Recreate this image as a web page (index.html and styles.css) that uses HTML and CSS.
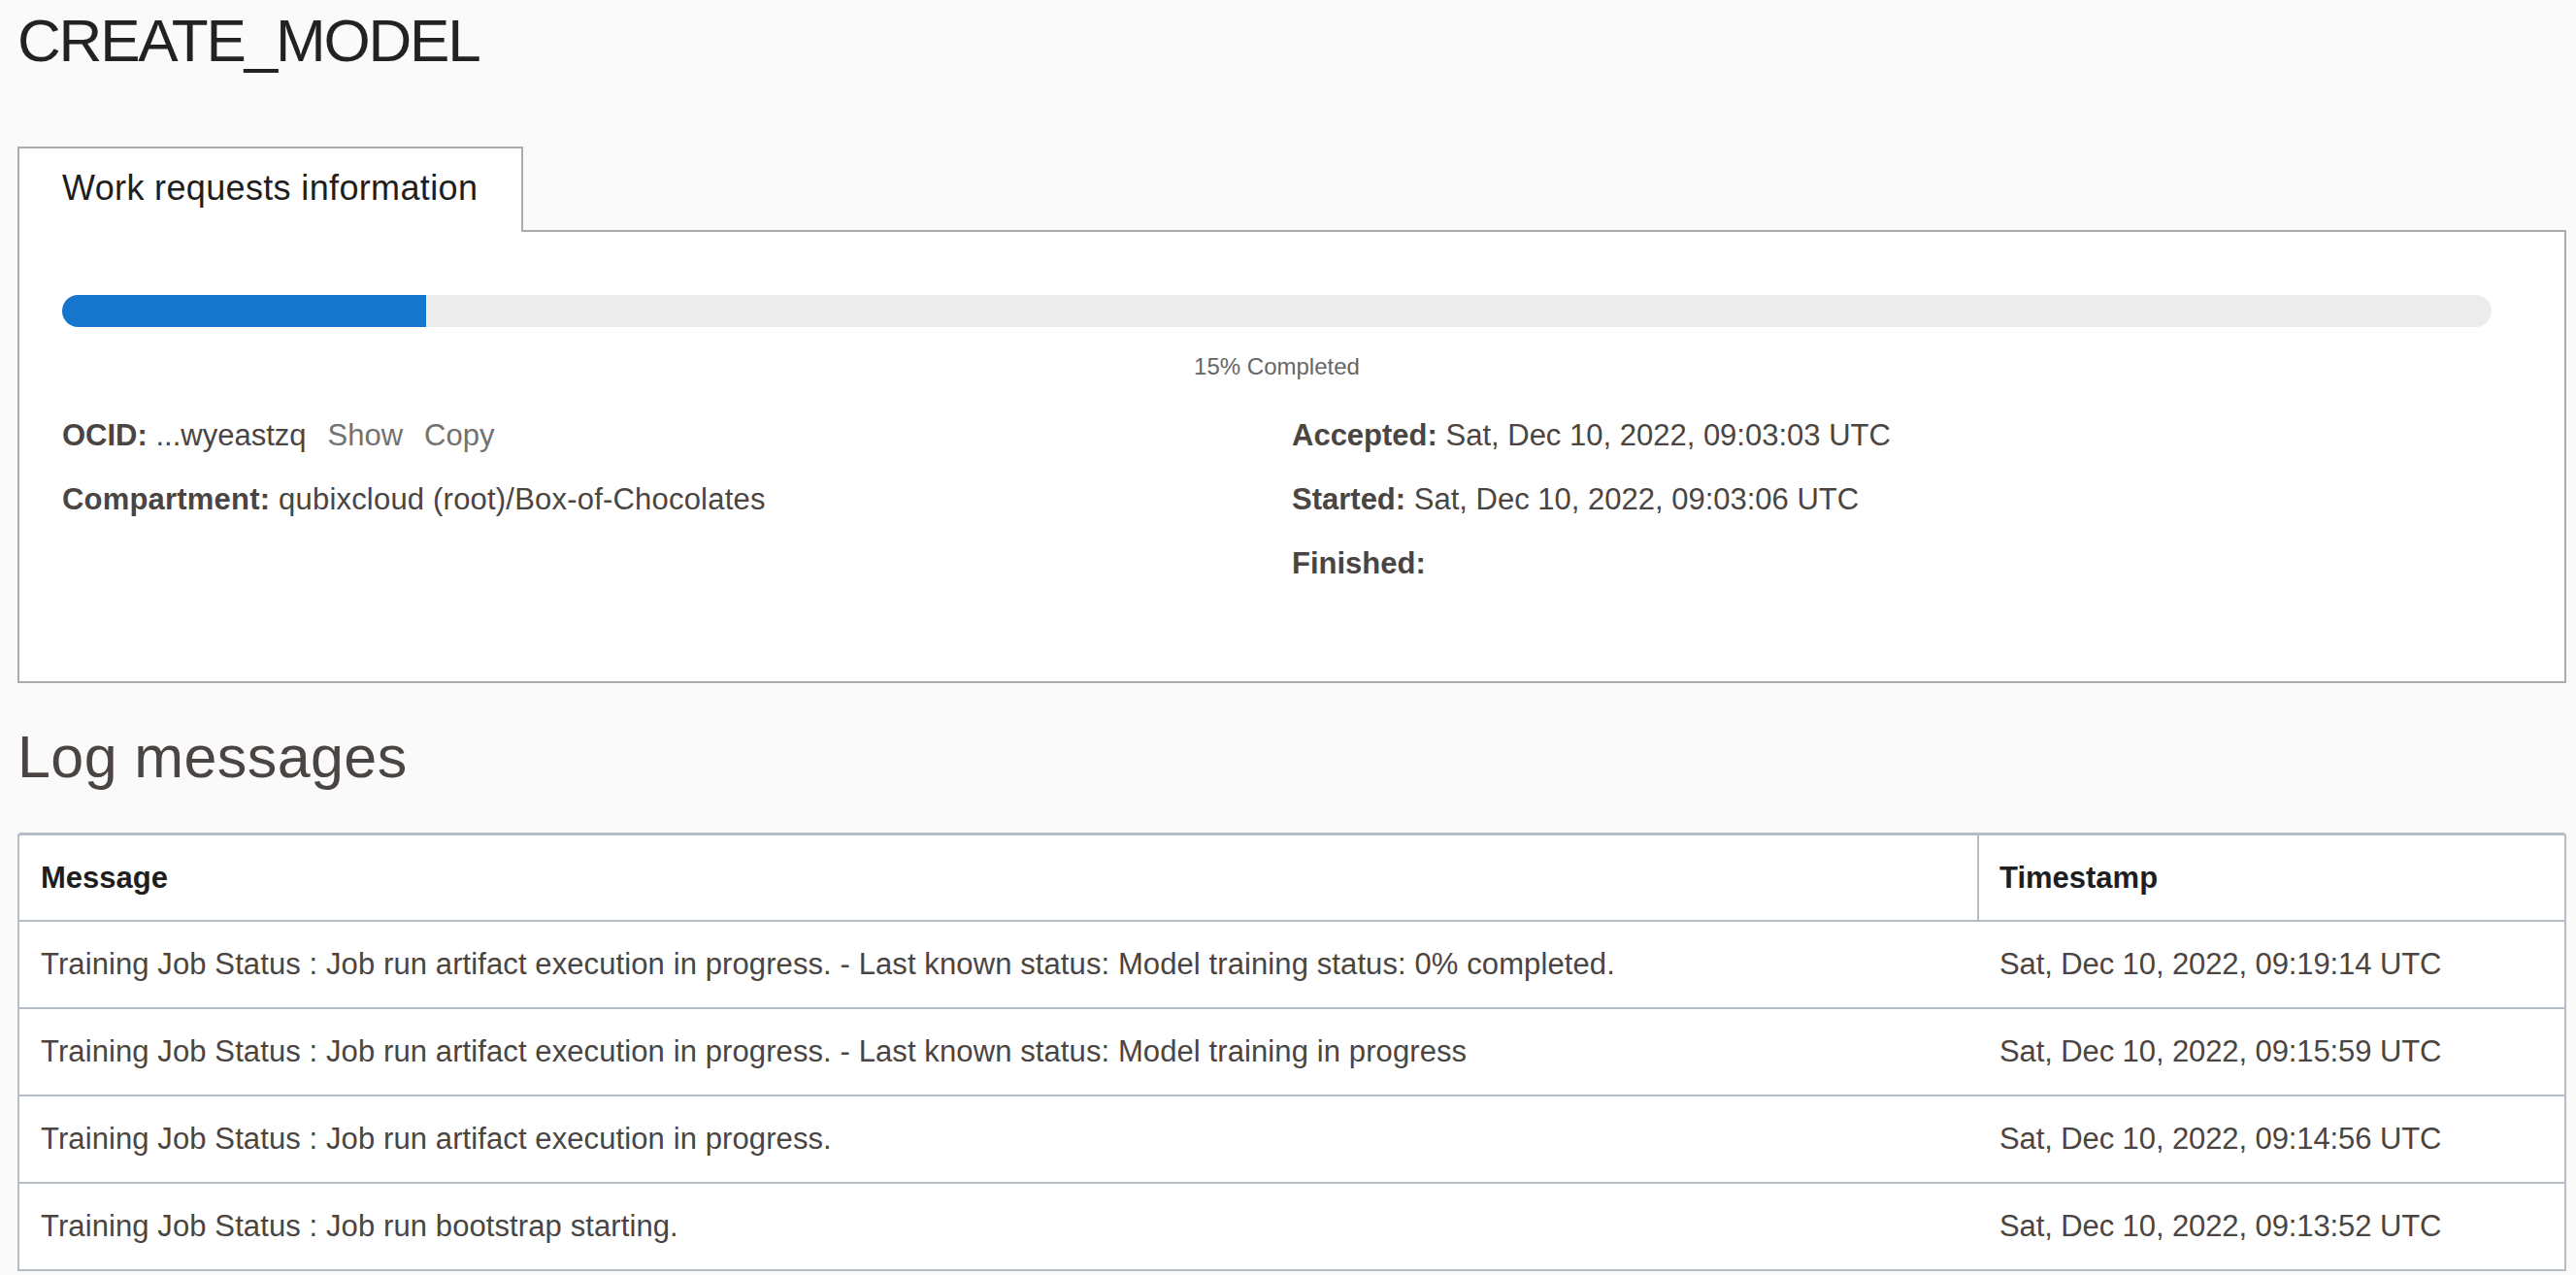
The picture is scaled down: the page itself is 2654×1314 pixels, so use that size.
FILE: index.html
```html
<!DOCTYPE html>
<html lang="en">
<head>
<meta charset="utf-8">
<title>CREATE_MODEL</title>
<link rel="stylesheet" href="styles.css">
</head>
<body>
<div class="page">
  <h1 class="page-title">CREATE_MODEL</h1>

  <div class="tabs">
    <div class="tab">Work requests information</div>
    <div class="tab-fill"></div>
  </div>
  <section class="panel">
    <div class="progress"><div class="progress-fill" style="width:15%"></div></div>
    <div class="progress-label">15% Completed</div>
    <div class="info">
      <div class="info-col">
        <div class="info-row"><span class="label">OCID:</span> ...wyeastzq<span class="link">Show</span><span class="link">Copy</span></div>
        <div class="info-row info-row-wide"><span class="label">Compartment:</span> qubixcloud (root)/Box-of-Chocolates</div>
      </div>
      <div class="info-col">
        <div class="info-row"><span class="label">Accepted:</span> Sat, Dec 10, 2022, 09:03:03 UTC</div>
        <div class="info-row"><span class="label">Started:</span> Sat, Dec 10, 2022, 09:03:06 UTC</div>
        <div class="info-row"><span class="label">Finished:</span></div>
      </div>
    </div>
  </section>

  <h2 class="section-title">Log messages</h2>

  <table class="log-table">
    <thead>
      <tr>
        <th class="col-msg">Message</th>
        <th class="col-ts">Timestamp</th>
      </tr>
    </thead>
    <tbody>
      <tr>
        <td class="col-msg">Training Job Status : Job run artifact execution in progress. - Last known status: Model training status: 0% completed.</td>
        <td class="col-ts">Sat, Dec 10, 2022, 09:19:14 UTC</td>
      </tr>
      <tr>
        <td class="col-msg">Training Job Status : Job run artifact execution in progress. - Last known status: Model training in progress</td>
        <td class="col-ts">Sat, Dec 10, 2022, 09:15:59 UTC</td>
      </tr>
      <tr>
        <td class="col-msg">Training Job Status : Job run artifact execution in progress.</td>
        <td class="col-ts">Sat, Dec 10, 2022, 09:14:56 UTC</td>
      </tr>
      <tr>
        <td class="col-msg">Training Job Status : Job run bootstrap starting.</td>
        <td class="col-ts">Sat, Dec 10, 2022, 09:13:52 UTC</td>
      </tr>
    </tbody>
  </table>
</div>
</body>
</html>
```

FILE: styles.css
```css
* {
  box-sizing: border-box;
}

html, body {
  margin: 0;
  padding: 0;
  background: #fafafa;
}

body {
  font-family: "Liberation Sans", Arial, Helvetica, sans-serif;
  color: #4a4542;
}

.page {
  padding: 0 10px 0 18px;
}

.page-title {
  margin: 6px 0 0 0;
  font-size: 62px;
  line-height: 72px;
  font-weight: 400;
  letter-spacing: -2.2px;
  color: #222222;
}

/* Tabs */
.tabs {
  display: flex;
  margin-top: 73px;
}

.tab {
  background: #ffffff;
  border: 2px solid #ababab;
  border-bottom: none;
  padding: 0 45px 5px 44px;
  line-height: 81px;
  font-size: 36px;
  letter-spacing: 0.35px;
  color: #1e1e1e;
  white-space: nowrap;
}

.tab-fill {
  flex: 1;
  border-bottom: 2px solid #ababab;
}

/* Panel */
.panel {
  background: #ffffff;
  border: 2px solid #ababab;
  border-top: none;
  padding: 65px 75px 88px 44px;
}

.progress {
  height: 33px;
  border-radius: 16.5px;
  background: #ececec;
  overflow: hidden;
}

.progress-fill {
  height: 100%;
  background: #1675cd;
}

.progress-label {
  margin-top: 25px;
  text-align: center;
  font-size: 24px;
  line-height: 32px;
  color: #666666;
}

.info {
  margin-top: 22px;
  display: grid;
  grid-template-columns: 1fr 1fr;
  column-gap: 31px;
}

.info-row {
  font-size: 31px;
  line-height: 66px;
  white-space: nowrap;
  color: #4a4542;
}

.info-row-wide {
  letter-spacing: 0.2px;
}

.label {
  font-weight: 700;
}

.link {
  margin-left: 22px;
  color: #727272;
  cursor: pointer;
}

/* Log messages */
.section-title {
  margin: 41px 0 43px 0;
  font-size: 61px;
  line-height: 70px;
  font-weight: 400;
  letter-spacing: 0.4px;
  color: #4a4542;
}

.log-table {
  width: 100%;
  table-layout: fixed;
  border-collapse: separate;
  border-spacing: 0;
  background: #ffffff;
  border-top: 3px solid #b7bdc6;
  border-left: 2px solid #b7bdc6;
  border-right: 2px solid #b7bdc6;
  border-radius: 4px 4px 0 0;
}

.log-table th,
.log-table td {
  text-align: left;
  vertical-align: middle;
  font-size: 31px;
  white-space: nowrap;
  border-bottom: 2px solid #b7bdc6;
}

.log-table th {
  height: 89px;
  font-weight: 700;
  color: #1e1e1e;
}

.log-table td {
  height: 90px;
  color: #4a4542;
}

.log-table th.col-msg,
.log-table td.col-msg {
  padding-left: 22px;
}

.log-table td.col-msg {
  letter-spacing: 0.1px;
}

.log-table th.col-ts {
  width: 605px;
  border-left: 2px solid #b7bdc6;
  padding-left: 21px;
}

.log-table td.col-ts {
  padding-left: 23px;
  letter-spacing: -0.1px;
}
```
